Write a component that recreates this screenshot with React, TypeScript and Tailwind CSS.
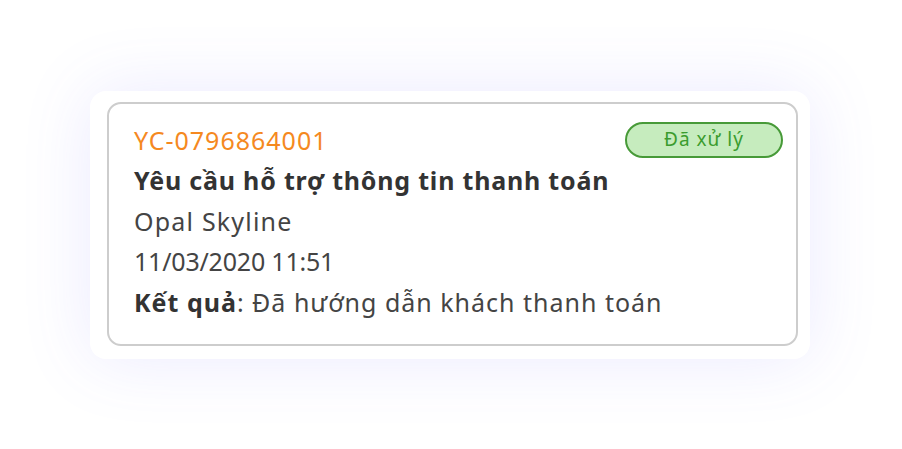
import React from "react";

export default function App() {
  return (
    <div
      className="w-[902px] h-[449px] bg-white flex items-center justify-center"
      style={{ fontFamily: "'Noto Sans', sans-serif" }}
    >
      <div className="w-[720px] h-[268px] ml-[-2px] rounded-[16px] bg-white shadow-[0_0_70px_rgba(100,90,255,0.13)] pt-[11px] pl-[17px] pr-[12px] pb-[13px]">
        <div className="h-full rounded-[14px] border-2 border-[#cdcdcd] pl-[25px] pr-[13px] pt-[16px] relative">
          <div className="absolute right-[13px] top-[18px] w-[158px] h-[36px] rounded-full bg-[#c6ecbe] border-2 border-[#479a38] flex items-center justify-center text-[19px] tracking-[1px] text-[#3b9c2e]">
            Đã xử lý
          </div>
          <div className="flex flex-col text-[25px] leading-[40.5px] text-[#444] tracking-[1px]">
            <div className="text-[#f5891f]">YC-0796864001</div>
            <div className="font-bold text-[#333] tracking-[0.8px]">Yêu cầu hỗ trợ thông tin thanh toán</div>
            <div className="tracking-[1.2px]">Opal Skyline</div>
            <div className="tracking-[-0.2px]">11/03/2020 11:51</div>
            <div>
              <span className="font-bold text-[#333]">Kết quả</span>: Đã hướng dẫn khách thanh toán
            </div>
          </div>
        </div>
      </div>
    </div>
  );
}
